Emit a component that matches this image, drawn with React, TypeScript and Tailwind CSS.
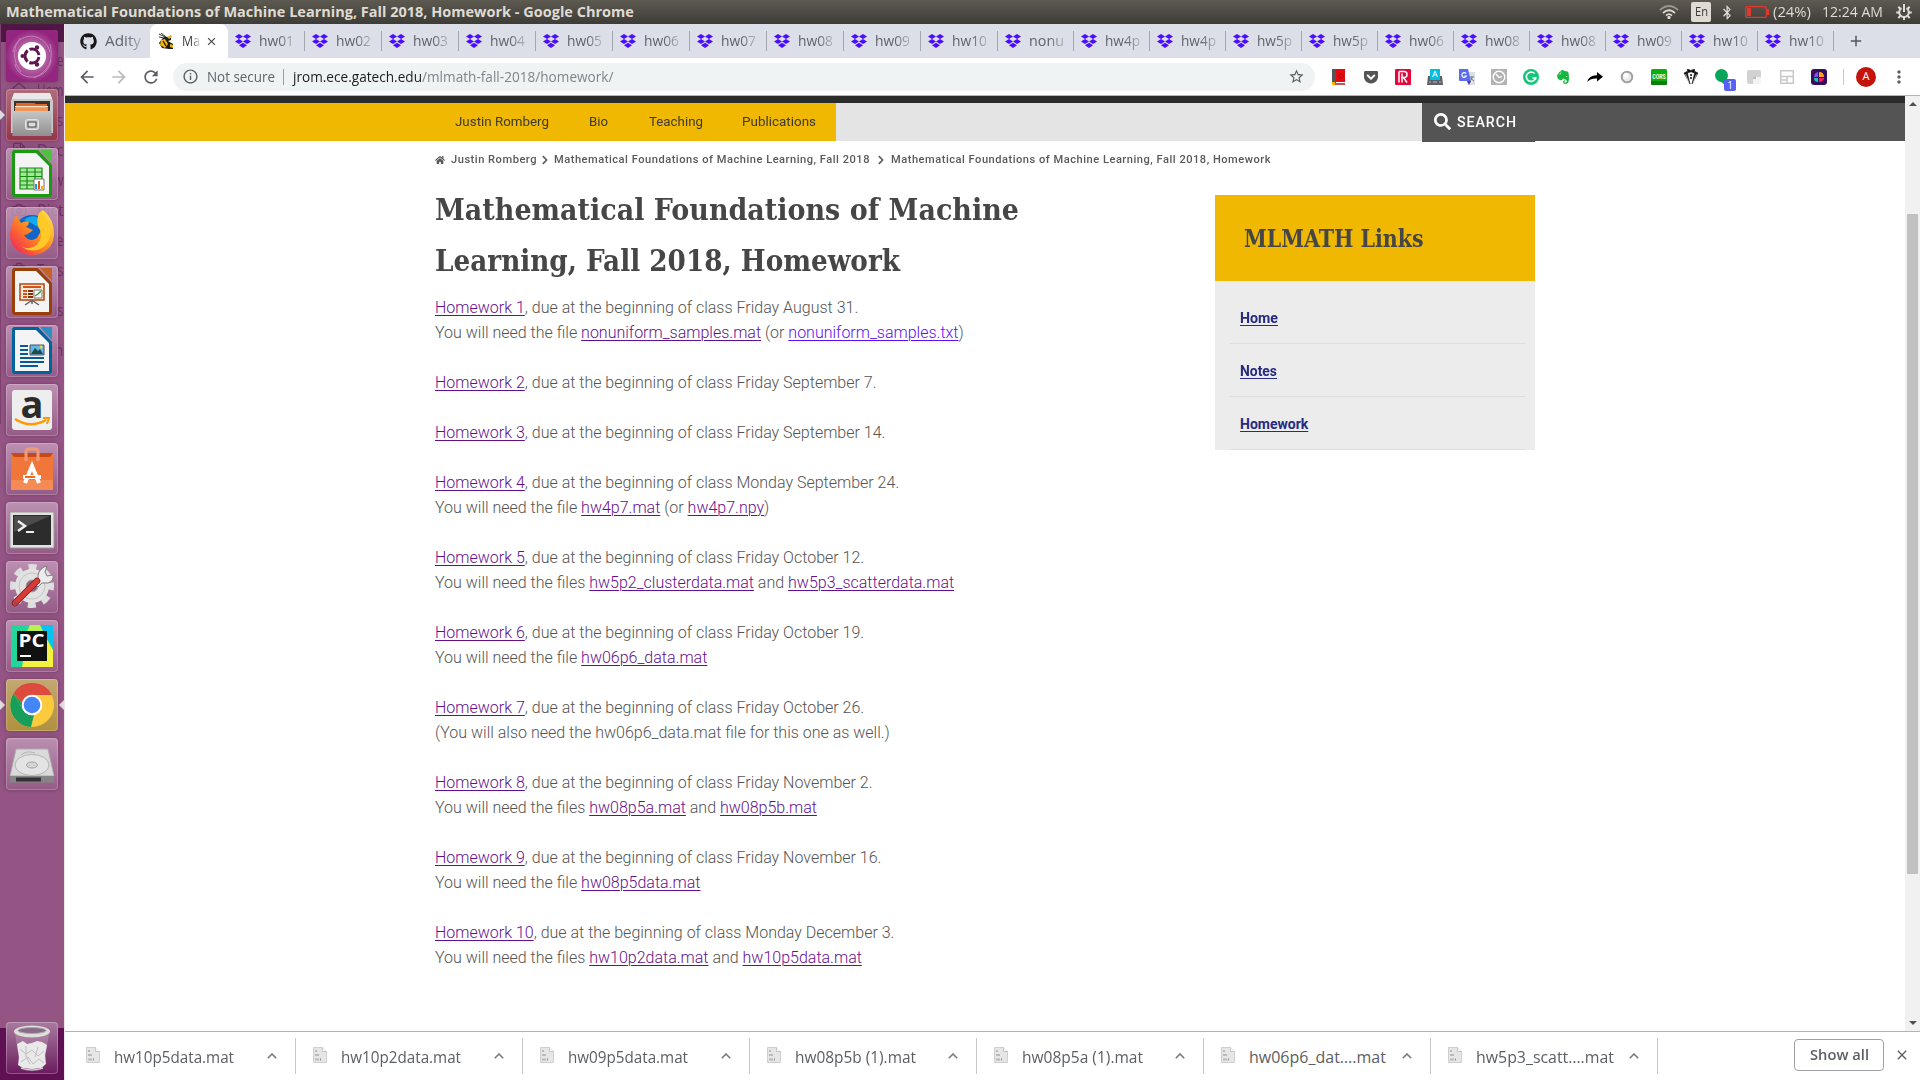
import React, { useLayoutEffect, useRef, useState } from "react";
import { FaGithub, FaEvernote, FaGetPocket, FaHome, FaSearch, FaChevronRight, FaBluetoothB } from "react-icons/fa";
import { MdArrowBack, MdArrowForward, MdRefresh, MdInfoOutline, MdStarBorder, MdMoreVert, MdAdd, MdClose } from "react-icons/md";
import { House, FileText, Camera, Trash2 } from "lucide-react";

/* Sets a run of text to a known width. */
function Fit({ w, className = "", children }: { w: number; className?: string; children: React.ReactNode }) {
  const ref = useRef<HTMLSpanElement>(null);
  const [k, setK] = useState(1);
  useLayoutEffect(() => {
    if (ref.current && ref.current.offsetWidth) setK(w / ref.current.getBoundingClientRect().width);
  }, [w]);
  return (
    <span className={"inline-block shrink-0 whitespace-pre " + className} style={{ width: w }}>
      <span ref={ref} className="inline-block origin-left whitespace-pre" style={Math.abs(k - 1) < 0.004 ? undefined : { transform: `scaleX(${k})` }}>
        {children}
      </span>
    </span>
  );
}

const ui = "font-['Open_Sans','Noto_Sans',sans-serif]";

const Dropbox = () => (
  <svg viewBox="0 0 16 14" className="h-[14px] w-4 shrink-0" fill="#4a0dff">
    <path d="M4 0l4 2.5L4 5 0 2.500zM12 0l4 2.500L12 5 8 2.500zM4 5l4 2.500L4 10 0 7.500zM12 5l4 2.500-4 2.500-4-2.500zM8 8.700l4 2.500L8 13.900 4 11.200z" />
  </svg>
);

const Bee = () => (
  <svg viewBox="0 0 16 16" className="h-4 w-4 shrink-0">
    <path d="M1 1l6 3M3 0l5 4M1 4l5 1" stroke="#333" strokeWidth="1" />
    <path d="M4 6q4-4 7-1l2-3v5l-3 1 5 3v5h-4l-7-1-3-5z" fill="#1c1a17" />
    <path d="M3 7l4-1 3 5-3 4-5-3zM9 4l4-2 1 2-3 2zM12 11l3 1v3l-3-1z" fill="#eeb211" />
    <path d="M5 8l3 5" stroke="#111" strokeWidth="1.200" />
  </svg>
);

const wide = ["hw01", "hw02", "hw03", "hw04", "hw05", "hw06", "hw07", "hw08", "hw09", "hw10"];
const narrow = ["nonu", "hw4p", "hw4p", "hw5p", "hw5p", "hw06", "hw08", "hw08", "hw09", "hw10", "hw10"];

function Tab({ name, slim }: { name: string; slim?: boolean }) {
  return (
    <div className={"flex h-full shrink-0 items-center pl-[7px] " + (slim ? "w-[76px]" : "w-[77px]")}>
      <Dropbox />
      <div className="-mt-px ml-2 w-[36px] overflow-hidden text-[15px] text-[#606268] [mask-image:linear-gradient(to_right,black_55%,rgba(0,0,0,0.25)_100%)]">
        <Fit w={35}>{name}</Fit>
      </div>
      <div className="mr-0 ml-auto h-5 w-px bg-[#a3a6ad]" />
    </div>
  );
}

function TitleBar() {
  return (
    <div className={"flex h-6 w-full items-center bg-gradient-to-b from-[#5d5a51] to-[#3e3c37] pl-[6px] text-[#dfdbd2] " + ui}>
      <Fit w={626} className="text-[14.500px] leading-6 font-bold">Mathematical Foundations of Machine Learning, Fall 2018, Homework - Google Chrome</Fit>
      <div className="ml-auto flex h-6 items-center">
        <svg viewBox="0 0 20 14" className="mr-3 h-[14px] w-5" fill="none" stroke="#dfdbd2" strokeWidth="1.700">
          <path d="M1 5q9-8 18 0" stroke="#9a978f" /><path d="M4 8q6-5.500 12 0M7 10.700q3-3 6 0" /><circle cx="10" cy="12.500" r=".8" fill="#dfdbd2" />
        </svg>
        <div className="flex h-5 w-5 items-center justify-center rounded-[2px] bg-[#dfdbd2] text-[13px] text-[#3c3b37]"><Fit w={13}>En</Fit></div>
        <FaBluetoothB className="ml-[10px] h-[15px] w-3" />
        <svg viewBox="0 0 24 12" className="mr-[4px] ml-3 h-3 w-6"><rect x=".7" y=".7" width="20.600" height="10.600" rx="1" fill="none" stroke="#df382c" strokeWidth="1.300" /><path d="M2 2h4v8H2zM22 3h2v6h-2z" fill="#df382c" /></svg>
        <Fit w={38} className="text-[14.500px]">(24%)</Fit>
        <Fit w={61} className="ml-[11px] text-[14.500px]">12:24 AM</Fit>
        <svg viewBox="0 0 16 16" className="mr-2 ml-[13px] h-4 w-4" fill="none" stroke="#dfdbd2">
          <path d="M5.500 4.200a4.800 4.800 0 105 0" strokeWidth="2" />
          <path d="M8 0v8" strokeWidth="2" />
          <path d="M2.300 2.800l2 2M13.700 2.800l-2 2M.2 8.500h3M12.800 8.500h3M2.300 14l2-2M13.700 14l-2-2M8 13v3" strokeWidth="2" />
        </svg>
      </div>
    </div>
  );
}

const P = ({ children }: { children: React.ReactNode }) => <svg viewBox="0 0 16 16" className="h-4 w-4 shrink-0">{children}</svg>;

function Toolbar() {
  return (
    <div className={"flex h-[37px] items-center bg-white text-[#5b5e63] " + ui}>
      <MdArrowBack className="ml-[12px] h-5 w-5" />
      <MdArrowForward className="ml-[12px] h-5 w-5 text-[#b9bbbd]" />
      <MdRefresh className="ml-[12px] h-5 w-5" />
      <div className="ml-[12px] flex h-7 w-[1142px] items-center rounded-full bg-[#eff3f4] pl-[9px]">
        <MdInfoOutline className="h-[17px] w-[17px]" />
        <Fit w={68} className="ml-[8px] text-[14.500px] text-[#5f6368]">Not secure</Fit>
        <div className="ml-2 h-4 w-px bg-[#9b9ea1]" />
        <Fit w={129} className="ml-[9px] text-[15px] text-[#1c1d1f]">jrom.ece.gatech.edu</Fit>
        <Fit w={191.5} className="text-[15px] text-[#80848a]">/mlmath-fall-2018/homework/</Fit>
        <MdStarBorder className="mr-[10px] ml-auto h-[17px] w-[17px]" />
      </div>
      <div className="ml-[16px] flex gap-4">
        <P><path d="M1 0h4v14H1z" fill="#555" /><path d="M5 0h9v13H5z" fill="#e80a12" /><path d="M7 8l3-4 3 4M8 9h4" stroke="#a00" fill="none" /><path d="M3 14h11v2H3z" fill="#c0555a" /><path d="M1 13h3v3H1z" fill="#f4b400" /></P>
        <FaGetPocket className="h-4 w-4 shrink-0 text-[#555]" />
        <P><rect width="16" height="16" rx="1" fill="#e4073c" /><path d="M4 2.500h5a3 3 0 010 6H6M4 2.500v11M8.500 8.500l3.500 5M7 4.500v9" fill="none" stroke="#fff" strokeWidth="1.500" /></P>
        <P><path d="M1 7h14l1 9H0z" fill="#5c6068" /><path d="M3 0h10v11H3z" fill="#05bfe0" /><path d="M5.500 8L8 2l2.500 6M6.500 6h3" fill="none" stroke="#fff" /><path d="M2 13h2M6 13h4M12 13h2" stroke="#bbb" /></P>
        <P><path d="M6 3h10v13H9z" fill="#dcdfe3" /><path d="M0 0h9l3 12H1a1 1 0 01-1-1z" fill="#5b6cf0" /><path d="M8 12h4l-2 4z" fill="#4527c8" /><path d="M7 4.500a2.300 2.300 0 10.300 2.500H5.500" fill="none" stroke="#fff" strokeWidth="1.200" /><path d="M11 8h4M13 7v1q0 3-2 4M12 9q1 2 3 3" fill="none" stroke="#69808a" /></P>
        <P><path d="M0 0h16v16H0z" fill="#b3b3b3" /><circle cx="8" cy="8" r="5.800" fill="none" stroke="#fff" strokeWidth="1.400" /><path d="M5 5l3 3.500 3-.8" fill="none" stroke="#fff" strokeWidth="1.300" /></P>
        <P><circle cx="8" cy="8" r="8" fill="#11c678" /><path d="M11.500 4.500A4.700 4.700 0 1012.600 9H9.500" fill="none" stroke="#fff" strokeWidth="1.700" /><path d="M12.500 8v3" stroke="#fff" strokeWidth="1.500" /></P>
        <FaEvernote className="h-4 w-4 shrink-0 text-[#14b83e]" />
        <P><path d="M0 13Q2 6 10 6.200V3l6 4.800-6 4.700V9.600Q4 9.300 0 13z" fill="#000" /></P>
        <P><circle cx="8" cy="8" r="5.300" fill="#ececec" stroke="#a2a2a2" strokeWidth="2" /><circle cx="6.800" cy="6.500" r="2.500" fill="#fff" /></P>
        <P><rect width="16" height="16" rx="1.500" fill="#0aae0d" /><path d="M0 12h16v2.500a1.500 1.500 0 01-1.500 1.500h-13A1.500 1.500 0 010 14.500z" fill="#087e0a" /><text x="1.300" y="10.300" fontSize="7.500" fontWeight="bold" textLength="13.400" lengthAdjust="spacingAndGlyphs" fill="#fff" fontFamily="Roboto">CORS</text></P>
        <P><path d="M4.500 0L8 1.500 11.500 0v4L8 2.800 4.500 4zM1 4l3-1.500L7 15zM15 4l-3-1.500L9 15z" fill="#111" stroke="#111" strokeWidth=".6" /><path d="M2.500 5l3 8M13.500 5l-3 8" stroke="#fff" strokeWidth=".6" /><circle cx="8" cy="6" r="1" /><circle cx="8" cy="9" r="1" /></P>
        <div className="relative h-4 w-4 shrink-0">
          <P><circle cx="6.500" cy="6.500" r="6.500" fill="#0ba45b" /><path d="M5 12h6l-1 4z" fill="#0ba45b" /></P>
          <div className="absolute top-[10px] left-[9px] flex h-3 w-3 items-center justify-center rounded-[2px] bg-[#5660f2] text-[10px] leading-3 text-white">1</div>
        </div>
        <P><path d="M2 1h10a2 2 0 012 2v5H6v7H2a2 2 0 01-2-2V3a2 2 0 012-2z" fill="#d2d2d2" /><path d="M6 8h8v5a2 2 0 01-2 2H6z" fill="#f3f3f3" /><path d="M6 8h3v2H6z" fill="#bdbdbd" /></P>
        <P><path d="M1.700 1.700h12.600v12.600H1.700zM1 7.500h14M8 7.500v7M1 11h7" fill="none" stroke="#c8c8c8" strokeWidth="1.500" /></P>
        <P><rect width="16" height="16" rx="3" fill="#33105e" /><path d="M7 3v5H3q0-4 4-5z" fill="#8b4be0" /><path d="M8 3q5 0 5 5H8z" fill="#f7a81b" /><path d="M3 9h4v4q-4 0-4-4z" fill="#18c2b8" /><path d="M8 9h5q0 4-5 4z" fill="#f1205c" /></P>
      </div>
      <div className="ml-[16px] h-4 w-px bg-[#c8c8c8]" />
      <div className="ml-[12px] flex h-5 w-5 items-center justify-center rounded-full bg-[#c5130b] text-[11px] text-white">A</div>
      <MdMoreVert className="ml-[13px] h-5 w-5" />
    </div>
  );
}

/* ---------- launcher ---------- */
const L = ({ children }: { children: React.ReactNode }) => <svg viewBox="0 0 52 52" className="h-[52px] w-[52px]">{children}</svg>;

const Doc = ({ color, dark, children }: { color: string; dark: string; children: React.ReactNode }) => (
  <L>
    <path d="M8 2h24l14 15v29a3 3 0 01-3 3H9a3 3 0 01-3-3V5a3 3 0 012-3z" fill={dark} />
    <path d="M9 5h21l13 13v28H9z" fill="#f4f4f4" />
    <path d="M34 2h12v13z" fill={color} />
    {children}
  </L>
);

const icons: React.ReactNode[] = [
  <L>
    <defs><radialGradient id="u"><stop offset="0" stopColor="#d8a6cf" /><stop offset="1" stopColor="#94257e" /></radialGradient></defs>
    <rect width="52" height="52" rx="3" fill="url(#u)" />
    <path d="M7 22C10 2 38 0 44 22M45 30C42 52 12 52 9 34M14 8Q2 25 15 42M44 14Q50 38 28 48" fill="none" stroke="#c87fbc" />
    <circle cx="26" cy="26" r="14" fill="#fff" />
    <circle cx="26" cy="26" r="7" fill="none" stroke="#5e1750" strokeWidth="3" strokeDasharray="12.600 2" strokeDashoffset="-1" />
    <circle cx="16.500" cy="26" r="2" fill="#5e1750" /><circle cx="31" cy="17.500" r="2.200" fill="#5e1750" /><circle cx="31" cy="34.500" r="2.200" fill="#5e1750" />
  </L>,
  <L>
    <defs><linearGradient id="cab" x1="0" y1="0" x2="0" y2="1"><stop offset="0" stopColor="#c6c6c6" /><stop offset="1" stopColor="#8f8f8f" /></linearGradient></defs>
    <path d="M8 4h36l3 8v32H5V12z" fill="#c9c9c9" /><path d="M8 4h36l2 6H6z" fill="#e9e9e9" /><path d="M8 12h36v12H8z" fill="#3d332c" />
    <path d="M10 14h18l2 1h11v7H10z" fill="#e0662c" /><path d="M9 17h33v1.500H9z" fill="#fbe3c8" /><path d="M9 19h33v4H9z" fill="#ee9456" />
    <path d="M6.500 22h39v25h-39z" fill="url(#cab)" />
    <rect x="19.500" y="30.500" width="13" height="10" rx="2" fill="#c9c9c9" stroke="#e6e6e6" /><rect x="22" y="33" width="8" height="5" fill="#ddd" stroke="#444" />
  </L>,
  <Doc color="#4cc23f" dark="#199a11">
    <path d="M14 20h22v21H14z" fill="#a2e898" /><path d="M14 20h22v21H14zM14 24h22M14 28.500h22M14 33h22M14 37h22M21 20v21M29 20v21" fill="none" stroke="#188a12" strokeWidth="1.200" />
    <path d="M28 31h10v11H28z" fill="#fff" stroke="#777" /><path d="M29 36h2v5h-2z" fill="#199be0" /><path d="M32 33h2v8h-2z" fill="#e0571a" /><path d="M35 38h2v3h-2z" fill="#efb310" />
  </Doc>,
  <L>
    <defs><linearGradient id="f" x1="1" y1="0" x2="0" y2="1"><stop offset="0" stopColor="#fff44f" /><stop offset=".5" stopColor="#ff8a1e" /><stop offset="1" stopColor="#f01463" /></linearGradient></defs>
    <circle cx="26" cy="26" r="18" fill="#1265c8" /><path d="M18 13q10-8 18 1l-4 6q-8-5-14-7z" fill="#15a8ec" />
    <path d="M10 8l5 8q5-3 8-1 0 3-3 5l7 3q-5 5-9 5 5 8 13 3l4-7q4-12-3-15 1-4 5-6 11 9 11 24c0 12-9 21-22 21S4 39 4 27q1-9 6-19z" fill="url(#f)" />
    <path d="M32 9q-2 9 2 14 3 8-3 15-8 6-16 1 12 9 24 0 8-9 5-20-5-9-9-15z" fill="#ffc928" />
  </L>,
  <Doc color="#c4622b" dark="#9a3f08">
    <path d="M14 18h24v16H14z" fill="#fbe9db" stroke="#b5430c" strokeWidth="1.500" /><path d="M17 21h18M17 25h4M17 28h4M17 31h4" stroke="#d45310" strokeWidth="2" /><path d="M22 25h5M22 28h5M22 31h5" stroke="#84310b" strokeWidth="2" />
    <path d="M28 24h8v8h-8z" fill="#fff" stroke="#777" /><path d="M29 30l3-2 3-3" stroke="#37a02d" fill="none" strokeWidth="1.500" /><path d="M26 34v4M19 39l6-4h2l6 4" stroke="#666" fill="none" strokeWidth="1.500" />
  </Doc>,
  <Doc color="#2b8fc0" dark="#03629c">
    <path d="M14 21h8M14 25h8M14 29h8M14 33h24M14 37h24M14 41h18" stroke="#075a94" strokeWidth="2" /><path d="M24 20h14v10H24z" fill="#62b5e8" stroke="#555" /><path d="M25 29l4-6 3 3 2-2 3 5z" fill="#1f4c4b" /><circle cx="35" cy="22" r="1.500" fill="#f8d648" />
  </Doc>,
  <L>
    <rect x="6" y="6" width="40" height="40" rx="3" fill="#eee" />
    <text x="26" y="34" textAnchor="middle" fontSize="38" fontWeight="bold" fontFamily="Open Sans" fill="#2b2b2b">a</text>
    <path d="M9 35q15 10 31 1" stroke="#f90" strokeWidth="2.500" fill="none" /><path d="M37 34h6l-2 6" stroke="#f90" strokeWidth="2" fill="none" />
  </L>,
  <L>
    <path d="M5 10h42v37H5z" fill="#f0763a" /><path d="M5 10h42l-3 4H8z" fill="#c64a18" /><path d="M5 37h42v10H5z" fill="#f58b54" />
    <path d="M20 18V9q0-3 3-3h6q3 0 3 3v9" fill="none" stroke="#f39a75" strokeWidth="3" />
    <path d="M19 40l7-17 7 17M17 34h18" stroke="#fff" strokeWidth="4" fill="none" /><path d="M19 34h10" stroke="#ef6a1c" strokeWidth="2" />
  </L>,
  <L>
    <rect x="4" y="10" width="44" height="36" rx="1" fill="#e2e2e2" stroke="#999" /><path d="M7 13h38v30H7z" fill="#2c2c2c" /><path d="M8 14h36l-36 16z" fill="#4c4c4c" />
    <path d="M12 19l7 5-7 5" stroke="#eee" strokeWidth="2.500" fill="none" /><path d="M20 30h8" stroke="#eee" strokeWidth="2" />
  </L>,
  <L>
    <circle cx="26" cy="25" r="19" fill="none" stroke="#dedede" strokeWidth="6" strokeDasharray="8 6.920" strokeDashoffset="4" />
    <circle cx="26" cy="25" r="11.500" fill="none" stroke="#e2e2e2" strokeWidth="11" />
    <circle cx="26" cy="25" r="13" fill="none" stroke="#c4c4c4" strokeWidth="1" /><circle cx="26" cy="25" r="6" fill="#8d6485" stroke="#aaa" />
    <path d="M29 23l3-5q-1-8 6-12l3-1-2 6 2 4 6-1q1 6-5 8l-6 0-4 4z" fill="#ececec" stroke="#7f7f7f" />
    <path d="M9 42L31 20" stroke="#8f1717" strokeWidth="6.500" strokeLinecap="round" /><path d="M9 42L31 20" stroke="#d43c35" strokeWidth="5" strokeLinecap="round" /><circle cx="9.500" cy="41.500" r="1.500" fill="#8b4675" />
  </L>,
  <L>
    <path d="M5 5h42v42H5z" fill="#22d69a" /><path d="M33 5h14v23z" fill="#07c3f2" /><path d="M24 5h9l14 25v17H16z" fill="#f2f23f" /><path d="M24 5h10l4 8H20z" fill="#b7f250" />
    <path d="M11 11h30v30H11z" fill="#111" /><text x="12.500" y="27" fontSize="18.500" fontWeight="bold" fontFamily="Open Sans" fill="#fff" textLength="26" lengthAdjust="spacingAndGlyphs">PC</text><path d="M14 36h11" stroke="#fff" strokeWidth="2" />
  </L>,
  <L>
    <circle cx="26" cy="26" r="22" fill="#fccb3d" /><path d="M26 26L7.500 14.500A22 22 0 0145.800 16H26z" fill="#dd4b3e" /><path d="M7.500 14.500L17 31q4 6 11 5l-3 12A22 22 0 017.500 14.500z" fill="#169e5a" />
    <path d="M7.500 14.500A22 22 0 0145.800 16H26q-8 1-9 9z" fill="#dd4b3e" /><path d="M7.500 14.500L17 31l1-5z" fill="#169e5a" /><circle cx="26" cy="26" r="10.300" fill="#fff" /><circle cx="26" cy="26" r="8.300" fill="#4486f5" />
  </L>,
  <L>
    <path d="M10 11h32l6 27H4z" fill="#dadada" stroke="#aaa" /><ellipse cx="26" cy="27" rx="17" ry="10.500" fill="#e4e4e4" stroke="#b5b5b5" /><ellipse cx="26" cy="27" rx="5.500" ry="3" fill="#d5d5d5" stroke="#a5a5a5" />
    <path d="M15 17q6-5 14-2" fill="none" stroke="#b5b5b5" /><path d="M4 38h44v6.500H4z" fill="#858585" /><path d="M10 39.500h25v4H10z" fill="#333" />
  </L>,
];

/* File manager sidebar showing through the translucent launcher. */
const ghosts: { t: string; c: string; icon?: React.ReactNode }[] = [
  { t: "Rece", c: "mt-[21px]" },
  { t: "Hom", c: "", icon: <House className="h-4 w-4" /> },
  { t: "Des", c: "" },
  { t: "Doc", c: "", icon: <FileText className="h-4 w-4" /> },
  { t: "Dow", c: "" },
  { t: "Pict", c: "", icon: <Camera className="h-4 w-4" /> },
  { t: "Vide", c: "" },
  { t: "Tras", c: "", icon: <Trash2 className="h-4 w-4" /> },
  { t: "Mus", c: "mt-[10px]" },
  { t: "Oth", c: "mt-[10px]" },
];

function Launcher() {
  return (
    <div className="relative flex w-[65px] shrink-0 flex-col border-r border-[#efe6ed] bg-[#945585]">
      <div className="absolute inset-0">
        <div className="absolute top-0 h-[18px] w-full bg-[#511846]" />
        <div className="absolute bottom-0 h-[52px] w-full bg-[#5e1053]" />
        <div className="relative flex h-[400px] flex-col border-l border-[#7c406e]">
          {ghosts.map((g, i) => (
            <div key={i} className={"flex h-[30px] shrink-0 items-center text-[15.500px] leading-[30px] text-[#6c3561] " + g.c + " " + ui}>
              <div className="ml-[10px] w-[26px]">{g.icon}</div>
              <Fit w={26.5}>{g.t}</Fit>
            </div>
          ))}
        </div>
      </div>
      <div className="relative flex flex-1 flex-col gap-[7px] pt-[6px]">
        {icons.map((ic, i) => (
          <div key={i} className="relative flex shrink-0 pl-[6px]">
            <div className={"h-[52px] w-[52px] rounded-[4px] bg-gradient-to-b shadow-[inset_0_0_0_1px_rgba(255,255,255,0.22),0_0_4px_rgba(50,0,40,0.35)] " + (i === 11 ? "from-[#c3a871] to-[#b1903e]" : i === 1 ? "from-[#b4707c]/90 to-[#94344a]" : "from-[#c9a4c0]/75 to-[#955d88]/75")}>
              {ic}
            </div>
            {(i === 1 || i === 11) && <div className="absolute top-[21px] left-0 border-y-[5px] border-l-[5px] border-y-transparent border-l-[#dcdcdc]" />}
            {i === 11 && <div className="absolute top-[21px] right-0 border-y-[5px] border-r-[5px] border-y-transparent border-r-[#dcdcdc]" />}
          </div>
        ))}
        <div className="mt-auto mb-[6px] ml-[6px] h-[52px] w-[52px] rounded-[4px] bg-gradient-to-b from-[#a87a9f] to-[#6a1a5e] shadow-[inset_0_0_0_1px_rgba(255,255,255,0.25)]">
          <L>
            <path d="M9 11h34l-5 34q-12 4-24 0z" fill="#fff" fillOpacity=".18" />
            <path d="M11 22l6-3 4 3 5-1 5-2 5 1 5 3-2 10 1 9-5 4-9 1-9-1-5-3 1-8z" fill="#e9e9e9" /><path d="M14 27l6 5 6-4 6 6 6-5M15 40l7-5 5 7 6-5 5 4M20 24v10l4 8M32 25l-3 10" stroke="#c0c0c0" fill="none" />
            <ellipse cx="26" cy="9.500" rx="18" ry="6" fill="#dedede" /><ellipse cx="26" cy="8.500" rx="14" ry="3" fill="#8a6a86" stroke="#aaa" /><path d="M15 46q11 4 22 0" stroke="#ccc" strokeWidth="1.500" fill="none" />
          </L>
        </div>
      </div>
    </div>
  );
}

/* ---------- page ---------- */
const A = ({ children, fresh }: { children: React.ReactNode; fresh?: boolean }) => (
  <a className={"underline decoration-1 underline-offset-2 " + (fresh ? "text-[#5a0ef5]" : "text-[#660f8c]")}>{children}</a>
);
const due = (n: number, d: string) => <><A>Homework {n}</A>, due at the beginning of class {d}.</>;

const items: [number, React.ReactNode, number?, React.ReactNode?][] = [
  [422, due(1, "Friday August 31"), 528, <>You will need the file <A>nonuniform_samples.mat</A> (or <A fresh>nonuniform_samples.txt</A>)</>],
  [440.5, due(2, "Friday September 7")],
  [449, due(3, "Friday September 14")],
  [463, due(4, "Monday September 24"), 333.5, <>You will need the file <A>hw4p7.mat</A> (or <A>hw4p7.npy</A>)</>],
  [428.5, due(5, "Friday October 12"), 518, <>You will need the files <A>hw5p2_clusterdata.mat</A> and <A>hw5p3_scatterdata.mat</A></>],
  [428.5, due(6, "Friday October 19"), 272, <>You will need the file <A>hw06p6_data.mat</A></>],
  [428.5, due(7, "Friday October 26"), 454.5, <>(You will also need the hw06p6_data.mat file for this one as well.)</>],
  [437, due(8, "Friday November 2"), 381, <>You will need the files <A>hw08p5a.mat</A> and <A>hw08p5b.mat</A></>],
  [446, due(9, "Friday November 16"), 265, <>You will need the file <A>hw08p5data.mat</A></>],
  [458.500, due(10, "Monday December 3"), 426, <>You will need the files <A>hw10p2data.mat</A> and <A>hw10p5data.mat</A></>],
];

function Page() {
  return (
    <div className="min-w-0 flex-1 bg-white font-[Roboto,sans-serif]">
      <div className="h-[7px] bg-[#2b2b2b]" />
      <div className="flex h-[38px] text-[13px] text-[#3d3a30]">
        <div className="flex w-[771px] items-center bg-[#f0b800] pl-[390px]">
          <Fit w={94}>Justin Romberg</Fit>
          <Fit w={19} className="ml-[40px]">Bio</Fit>
          <Fit w={54} className="ml-[41px]">Teaching</Fit>
          <Fit w={74} className="ml-[39px]">Publications</Fit>
        </div>
        <div className="w-[586px] bg-[#e4e4e4]" />
        <div className="flex flex-1 bg-[#545454]">
          <div className="flex h-[39px] w-[113px] items-center bg-[#545454] pl-3 text-white">
            <FaSearch className="-mt-[2px] h-[17px] w-[17px]" />
            <Fit w={60} className="ml-[6px] text-[15px] font-medium tracking-[1px]">SEARCH</Fit>
          </div>
        </div>
      </div>
      <div className="flex h-[37px] items-center pt-px pl-[370px] text-[11px] font-medium tracking-[0.500px] text-[#58595b]">
        <FaHome className="h-[10px] w-[10px]" />
        <Fit w={86} className="ml-[6px]">Justin Romberg</Fit>
        <FaChevronRight className="ml-[4px] h-[10px] w-[8px]" />
        <Fit w={316} className="ml-[5px]">Mathematical Foundations of Machine Learning, Fall 2018</Fit>
        <FaChevronRight className="ml-[7px] h-[10px] w-[8px]" />
        <Fit w={380} className="ml-[6px]">Mathematical Foundations of Machine Learning, Fall 2018, Homework</Fit>
      </div>
      <div className="flex pl-[370px]">
        <div className="w-[780px] pt-[6px]">
          <h1 className="flex flex-col font-['Roboto_Slab','DejaVu_Serif_Condensed','DejaVu_Serif',serif] text-[29.500px] leading-[51px] font-bold text-[#464646]">
            <Fit w={584}>Mathematical Foundations of Machine</Fit>
            <Fit w={465}>Learning, Fall 2018, Homework</Fit>
          </h1>
          <div className="mt-[9px] flex flex-col gap-[25px] text-[16px] leading-[25px] font-light text-[#545454]">
            {items.map(([w, a, w2, b], i) => (
              <div key={i} className="flex flex-col">
                <Fit w={w}>{a}</Fit>
                {b && <Fit w={w2 as number}>{b}</Fit>}
              </div>
            ))}
          </div>
        </div>
        <aside className="mt-[17px] h-[255px] w-[320px] bg-[#ececec]">
          <h2 className="flex h-[86px] items-center bg-[#f0b800] pt-[2px] pl-[29px] font-['Roboto_Slab','DejaVu_Serif_Condensed','DejaVu_Serif',serif] text-[24.500px] font-bold text-[#464646]">
            <Fit w={179.500}>MLMATH Links</Fit>
          </h2>
          <div className="mr-[10px] ml-[15px] pt-[10px] text-[14px] font-bold text-[#262a80]">
            {([["Home", 38], ["Notes", 37], ["Homework", 68]] as [string, number][]).map(([t, w]) => (
              <div key={t} className="h-[53px] border-b border-[#dedede] pt-[17px] pl-[10px] leading-[20px]">
                <Fit w={w}><a className="underline decoration-1 underline-offset-2">{t}</a></Fit>
              </div>
            ))}
          </div>
        </aside>
      </div>
    </div>
  );
}

const downloads: [string, number][] = [
  ["hw10p5data.mat", 120], ["hw10p2data.mat", 120], ["hw09p5data.mat", 120], ["hw08p5b (1).mat", 121],
  ["hw08p5a (1).mat", 121], ["hw06p6_dat….mat", 137], ["hw5p3_scatt….mat", 138],
];

function Downloads() {
  return (
    <div className={"flex h-[49px] items-start border-t border-[#b2b2b2] bg-white pt-[6px] pl-[4px] text-[#5b5e63] " + ui}>
      {downloads.map(([t, w], i) => (
        <div key={i} className="flex h-9 w-[227px] shrink-0 items-center border-r border-[#c6c6c6] pl-[17px] text-[16px]">
          <svg viewBox="0 0 14 16" className="-mt-[2px] h-4 w-[14px]"><path d="M.5.500h9l4 4v11H.5z" fill="#e6e6e6" stroke="#cfcfcf" /><path d="M9.500.500v4h4" fill="#fff" stroke="#c5c5c5" /><path d="M3 3v2M3 7v2M5 7v2M3 11.500v2M5 11.500v2M7.500 11.500v2" stroke="#8e8e8e" /></svg>
          <Fit w={w} className="mt-[2px] ml-[14px]">{t}</Fit>
          <svg viewBox="0 0 10 6" className="mr-[18px] ml-auto h-[6px] w-[10px]"><path d="M.8 5.200L5 1l4.200 4.200" fill="none" stroke="#77797d" strokeWidth="1.600" /></svg>
        </div>
      ))}
      <div className="mt-[1px] ml-auto flex h-8 w-[90px] items-center justify-center rounded-[4px] border border-[#9fa1a4] pb-px text-[14px] font-semibold"><Fit w={59}>Show all</Fit></div>
      <MdClose className="mt-[9px] mr-[10px] ml-[10px] h-4 w-4" />
    </div>
  );
}

export default function App() {
  return (
    <div className="flex h-[1080px] w-[1920px] flex-col overflow-hidden">
      <TitleBar />
      <div className="flex min-h-0 flex-1">
        <Launcher />
        <div className="flex min-w-0 flex-1 flex-col">
          <div className={"flex h-[34px] items-center bg-[#dcdfe8] " + ui}>
            <div className="flex h-full w-[85px] items-center pl-[15px]">
              <FaGithub className="h-[17px] w-[17px] text-[#191717]" />
              <div className="-mt-px ml-2 text-[15px] text-[#606268] [mask-image:linear-gradient(to_right,black_55%,rgba(0,0,0,0.35)_100%)]"><Fit w={36}>Adity</Fit></div>
            </div>
            <div className="flex h-full w-[78px] items-center rounded-t-[8px] bg-white pl-[8px]">
              <Bee />
              <div className="-mt-px ml-2 w-[18px] overflow-hidden text-[15px] text-[#3c4043] [mask-image:linear-gradient(to_right,black_50%,rgba(0,0,0,0.15)_100%)]"><Fit w={18}>Ma</Fit></div>
              <MdClose className="ml-[5px] h-[13px] w-[13px] text-[#3c4043]" />
            </div>
            {wide.map((t) => <Tab key={t} name={t} />)}
            {narrow.map((t, i) => <Tab key={i} name={t} slim />)}
            <MdAdd className="ml-[13px] h-[18px] w-[18px] text-[#54575c]" />
          </div>
          <Toolbar />
          <div className="flex h-[936px] border-t border-[#b4b4b4]">
            <Page />
            <div className="flex w-[15px] flex-col items-center bg-[#f1f1f1]">
              <div className="mt-[6px] border-x-4 border-b-4 border-x-transparent border-b-[#505050]" />
              <div className="mt-[108px] h-[660px] w-[11px] bg-[#c1c1c1]" />
              <div className="mt-auto mb-[6px] border-x-4 border-t-4 border-x-transparent border-t-[#505050]" />
            </div>
          </div>
          <Downloads />
        </div>
      </div>
    </div>
  );
}
